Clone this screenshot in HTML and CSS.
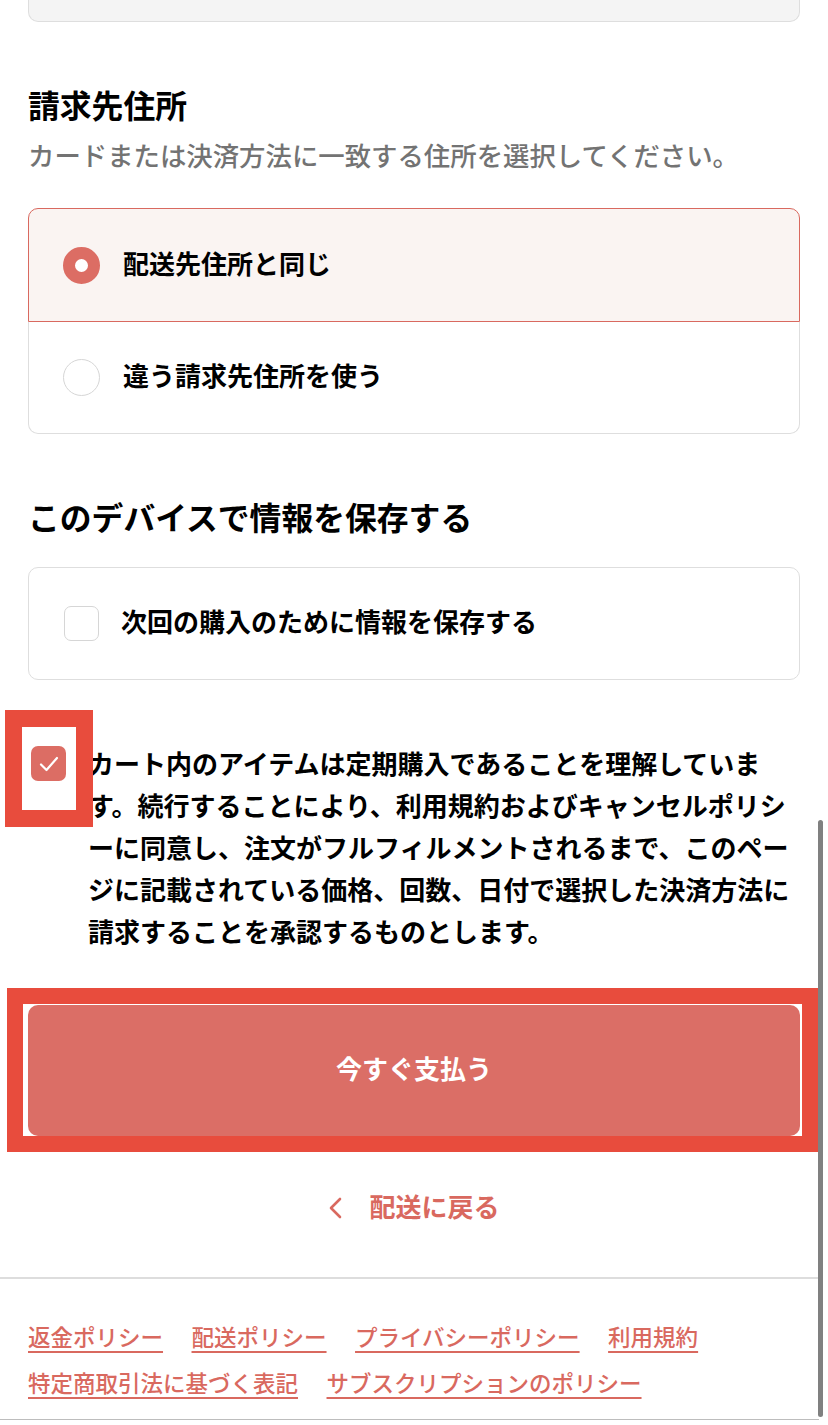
FILE: index.html
```html
<!DOCTYPE html>
<html>

<head>
    <meta charset="utf-8">
    <title>お支払い</title>
    <link rel="stylesheet" href="styles.css">
</head>

<body>
    <div class="page">
        <div class="prev-card"></div>

        <div class="section">
            <h2>請求先住所</h2>
            <p class="sub">カードまたは決済方法に一致する住所を選択してください。</p>
            <div class="choice-box">
                <label class="choice selected">
                    <span class="radio on"></span>
                    <span class="txt">配送先住所と同じ</span>
                </label>
                <label class="choice">
                    <span class="radio"></span>
                    <span class="txt">違う請求先住所を使う</span>
                </label>
            </div>
        </div>

        <div class="section">
            <h2 class="no-sub">このデバイスで情報を保存する</h2>
            <div class="choice-box">
                <label class="choice single">
                    <span class="check"></span>
                    <span class="txt">次回の購入のために情報を保存する</span>
                </label>
            </div>
        </div>

        <div class="consent">
            <div class="consent-check">
                <span class="check on">
                    <svg width="20" height="16" viewBox="0 0 20 16"><polyline points="2,8.5 7.5,14 18,2" fill="none" stroke="#fff" stroke-width="2.2" stroke-linecap="round" stroke-linejoin="round"/></svg>
                </span>
                <div class="mark mark-check"></div>
            </div>
            <p>カート内のアイテムは定期購入であることを理解しています。続行することにより、利用規約およびキャンセルポリシーに同意し、注文がフルフィルメントされるまで、このページに記載されている価格、回数、日付で選択した決済方法に請求することを承認するものとします。</p>
        </div>

        <div class="pay-box">
            <button class="pay">今すぐ支払う</button>
            <div class="mark mark-pay"></div>
        </div>

        <a href="#" class="back">
            <svg width="14" height="22" viewBox="0 0 14 22"><polyline points="12,2 3,11 12,20" fill="none" stroke="#d9695f" stroke-width="2.6" stroke-linecap="round" stroke-linejoin="round"/></svg>
            <span>配送に戻る</span>
        </a>
    </div>

    <div class="footer">
        <a href="#">返金ポリシー</a>
        <a href="#">配送ポリシー</a>
        <a href="#">プライバシーポリシー</a>
        <a href="#">利用規約</a>
        <a href="#">特定商取引法に基づく表記</a>
        <a href="#">サブスクリプションのポリシー</a>
    </div>

    <div class="scrollbar"></div>
</body>
</html>
```

FILE: styles.css
```css
*{
    margin: 0;
    padding: 0;
    box-sizing: border-box;
}
body{
    width: 828px;
    height: 1425px;
    overflow: hidden;
    position: relative;
    background: #fff;
    color: #000;
    font-family: "Noto Sans CJK JP", "Noto Sans", sans-serif;
}
.page{
    padding: 0 28px;
}
.prev-card{
    height: 22px;
    background-color: #f4f4f4;
    border: 1px solid #dedede;
    border-top: none;
    border-radius: 0 0 10px 10px;
}
.section{
    margin-top: 62px;
}
.section h2{
    font-size: 31.8px;
    line-height: 40px;
    font-weight: 700;
    margin-bottom: 11px;
}
.section h2.no-sub{
    margin-bottom: 31px;
}
.section .sub{
    font-size: 26.4px;
    line-height: 40px;
    font-weight: 500;
    color: #737373;
    margin-bottom: 33px;
}
.choice-box .choice{
    display: flex;
    align-items: center;
    height: 112px;
    padding-left: 34px;
    font-size: 26px;
    font-weight: 700;
    border: 1px solid #dedede;
    border-top: none;
    border-radius: 0 0 10px 10px;
}
.choice .txt{
    padding-bottom: 6px;
}
.choice-box .choice.selected{
    height: 114px;
    background-color: #faf4f2;
    border: 1px solid #d9695f;
    border-radius: 10px 10px 0 0;
}
.choice-box .choice.single{
    height: 113px;
    border-top: 1px solid #dedede;
    border-radius: 10px;
}
.radio{
    width: 37px;
    height: 37px;
    border-radius: 50%;
    border: 1.5px solid #d6d6d6;
    background: #fff;
    margin-right: 23px;
    flex-shrink: 0;
}
.radio.on{
    border: 12px solid #dc6d64;
}
.check{
    display: flex;
    align-items: center;
    justify-content: center;
    width: 35px;
    height: 35px;
    border-radius: 7px;
    border: 1.5px solid #d6d6d6;
    background: #fff;
    margin-left: 1px;
    margin-right: 22px;
    flex-shrink: 0;
}
.check.on{
    border: none;
    background-color: #dc6d64;
    margin: 0;
}
.consent{
    display: flex;
    align-items: flex-start;
    margin-top: 62px;
}
.consent-check{
    position: relative;
    margin: 4px 22px 0 3px;
}
.consent p{
    width: 712px;
    font-size: 26px;
    line-height: 42px;
    font-weight: 700;
    line-break: normal;
}
.mark{
    position: absolute;
    border-style: solid;
    border-color: #e84c3d;
}
.mark-check{
    left: -26px;
    top: -36px;
    width: 88px;
    height: 117px;
    border-width: 17px;
}
.pay-box{
    position: relative;
    margin-top: 53px;
}
.pay{
    display: block;
    width: 100%;
    height: 131px;
    padding-bottom: 6px;
    border: none;
    border-radius: 10px;
    background-color: #db6e66;
    color: #fff;
    font-family: inherit;
    font-size: 26px;
    font-weight: 700;
    cursor: pointer;
}
.mark-pay{
    left: -21px;
    top: -17px;
    width: 811px;
    height: 164px;
    border-width: 16px;
}
.back{
    display: flex;
    align-items: center;
    justify-content: center;
    gap: 27px;
    margin-top: 49px;
    height: 40px;
    text-decoration: none;
    color: #d9695f;
    font-size: 26px;
    font-weight: 700;
}
.back svg{
    margin-top: 6px;
}
.footer{
    margin-top: 52px;
    border-top: 2px solid #dddddd;
    border-bottom: 1px solid #bdbdbd;
    height: 143px;
    padding: 34px 28px 0 28px;
    display: flex;
    flex-wrap: wrap;
    align-content: flex-start;
    column-gap: 28.5px;
    width: 819px;
}
.footer a{
    font-size: 22.5px;
    line-height: 46px;
    font-weight: 500;
    color: #d9695f;
    text-decoration: underline;
    text-decoration-thickness: 2px;
    text-underline-offset: 5px;
}
.scrollbar{
    position: absolute;
    left: 818px;
    top: 820px;
    width: 5px;
    height: 597px;
    border-radius: 3px;
    background-color: #808080;
}
```
